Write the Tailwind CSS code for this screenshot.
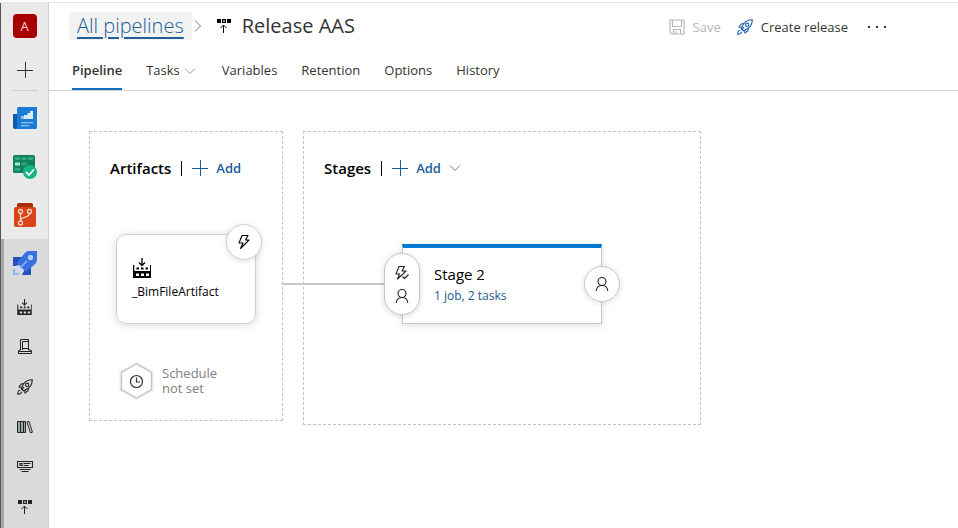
<!DOCTYPE html>
<html lang="en">
<head>
<meta charset="utf-8">
<title>Release AAS - Pipelines</title>
<script src="https://cdn.jsdelivr.net/npm/@tailwindcss/browser@4"></script>
</head>
<body class="flex min-h-screen flex-col bg-white font-['Open_Sans','Noto_Sans',sans-serif] text-[13px] leading-5 text-[#333]">

<svg class="hidden" aria-hidden="true">
  <symbol id="build" viewBox="0 0 18 20">
    <path fill="currentColor" fill-rule="evenodd" d="M0 7h1.300v6H17V7h1v13H0zM3 15.500v2.500h3v-2.500zm5 0v2.500h3v-2.500zm5 0v2.500h3v-2.500zM3.500 9.500h2.500v2h-2.500zM8 9.500h2.500v2H8zM12.500 9.500H15v2h-2.500z"/>
    <path fill="none" stroke="currentColor" stroke-width="1.300" d="M9 0v7M6 4.500l3 3 3-3"/>
  </symbol>
  <symbol id="release" viewBox="0 0 16 16">
    <path fill="currentColor" fill-rule="evenodd" d="M1 1h4v4H1zM6 1h4v4H6zm1.200 1.200v1.600h1.600V2.200zM11 1h4v4h-4z"/>
    <path fill="none" stroke="currentColor" stroke-width="1" d="M7.500 15V7.500M4.500 10l3-3 3 3"/>
  </symbol>
  <symbol id="rocket" viewBox="0 0 16 16">
    <g fill="none" stroke="currentColor" stroke-width="1.100">
      <path d="M15.300.700C11.500.800 8.500 2 6.500 5L4.200 9.300l2.500 2.500L11 9.500c3-2 4.200-5 4.300-8.800z"/>
      <path d="M7 4.500 4.200 5 2 8l2.700.300M11.500 9 11 11.800 8 14l-.300-2.700M4.200 9.300l2.500 2.500"/>
      <circle cx="10.200" cy="5.800" r="1.700"/>
      <path d="M4.500 10.500 7 8M3.300 11.300c-1.700 0-2.400 1.300-2.500 3.900 2.500-.100 3.800-.800 3.900-2.400"/>
    </g>
  </symbol>
  <symbol id="plus" viewBox="0 0 16 16"><path fill="none" stroke="currentColor" stroke-width="1" d="M0 8.500h16M8.500 0v16"/></symbol>
  <symbol id="down" viewBox="0 0 12 8"><path fill="none" stroke="currentColor" d="m1 1.500 5 5 5-5"/></symbol>
  <symbol id="bolt" viewBox="0 0 16 16"><path fill="none" stroke="currentColor" stroke-width="1.100" stroke-linejoin="round" d="M6 1.500h6L9.500 6H13L4.500 14.500 7 9H3z"/></symbol>
  <symbol id="boltcheck" viewBox="0 0 16 16"><path fill="none" stroke="currentColor" stroke-width="1.100" stroke-linejoin="round" d="M9.500 8.500 3.500 14l2-5H2l3-7.500h5.500L8 6h4zM8.500 11.500l2 2 4-4"/></symbol>
  <symbol id="person" viewBox="0 0 16 16"><g fill="none" stroke="currentColor" stroke-width="1.100"><circle cx="8" cy="5.500" r="4"/><path d="M2.200 15c.300-3.500 2.500-5.500 5.800-5.500s5.500 2 5.800 5.500"/></g></symbol>
</svg>

<div class="mt-[2px] flex flex-1 border-t border-[#e4e4e4]">
  <nav aria-label="Project" class="flex w-[49px] shrink-0 flex-col border-r border-l border-r-[#d0d0d0] border-l-[#555] bg-[#eaeaea]">
    <div class="flex h-[87px] flex-col items-center gap-6 pt-[11px]">
      <a href="#" aria-label="Project A" class="flex size-6 shrink-0 items-center justify-center rounded bg-[#a80000] text-[13px] text-[#f6d5d5]">A</a>
      <button aria-label="New" class="text-[#333]"><svg class="size-4"><use href="#plus"/></svg></button>
    </div>
    <hr class="mx-[10px] border-[#cfcfcf]">
    <a href="#" aria-label="Overview" class="mt-1 flex h-12 items-center justify-center">
      <svg class="size-6" viewBox="0 0 24 24"><path fill="#0d5ba5" d="M0 7h6v15H2a2 2 0 0 1-2-2z"/><path fill="#1b7cd3" d="M4 1.500A1.500 1.500 0 0 1 5.500 0H24v20.500a1.500 1.500 0 0 1-1.500 1.500H2.500A2 2 0 0 0 4 20z"/><path fill="#d7eafa" d="M8 12V9h3V8h3.500V6H17V4h3v8z"/><path fill="#8fc3ee" d="M8 9h3v3H8zM8 15h12v1.200H8zM8 18h8v1.200H8z"/></svg>
    </a>
    <a href="#" aria-label="Boards" class="flex h-12 items-center justify-center">
      <svg class="size-6" viewBox="0 0 24 24"><rect y="0" width="22" height="18" rx="1.500" fill="#15805f"/><path fill="#2fa87f" d="M2 2h5v3H2zM8.500 2h5v3h-5zM15 2h5v3h-5zM8.500 7.500h5v3h-5zM2 13h5v3H2z"/><path fill="#9cf0cd" d="M2 7.500h5v3H2z"/><circle cx="17" cy="17" r="7" fill="#17b584"/><path fill="none" stroke="#fff" stroke-width="1.800" d="m13 17 3 3 5-5.500"/></svg>
    </a>
    <a href="#" aria-label="Repos" class="flex h-12 items-center justify-center">
      <svg class="size-6" viewBox="0 0 24 24"><path fill="#a5300b" d="M4 1.500A1.500 1.500 0 0 1 5.500 0h13A1.500 1.500 0 0 1 20 1.500V5H4z"/><rect x="1" y="4" width="22" height="20" rx="2" fill="#d8451a"/><g fill="none" stroke="#ffd5c5" stroke-width="1.300"><circle cx="7.500" cy="8.500" r="2"/><circle cx="16.500" cy="8.500" r="2"/><circle cx="7.500" cy="20" r="2"/><path d="M7.500 10.500V18M16.500 10.500c0 4.500-8 2.500-9 7"/></g></svg>
    </a>
    <div class="flex flex-1 flex-col border-l-[3px] border-[#a6a6a6] bg-[#dadada] pr-[3px] text-[#222]">
      <a href="#" aria-label="Pipelines" class="flex h-12 items-center justify-center">
        <svg class="size-6" viewBox="0 0 24 24"><path fill="#2450bb" d="M0 6h9l-4 9H0zM18 14v10h-9l4-8z"/><path fill="#3b6fe0" d="M16 0h8v8c0 3-1 4-3 6l-8 7-9-9 7-9c1.500-2 3-3 5-3z"/><circle cx="17.500" cy="6.500" r="2.700" fill="#a9cbff"/><path stroke="#8db5ff" stroke-width="1.500" d="m5 19 9-9"/><path fill="#c9dcff" d="m4 14 6 6-2 2-6-6z"/><path fill="#8fb2f4" d="M0 18h2v4h4v2H0z"/></svg>
      </a>
      <a href="#" aria-label="Builds" class="flex h-10 items-center justify-center"><svg class="h-4 w-[15px]"><use href="#build"/></svg></a>
      <a href="#" aria-label="Environments" class="flex h-10 items-center justify-center">
        <svg class="size-4" viewBox="0 0 16 16"><path fill="none" stroke="currentColor" d="M3.500 11V.500h8V11M5.500 11V2.500h6M5.500 9.500h6M3.500 11H2L1.500 13v1.500h13V13l-.500-2h-2.500M1.500 12.500h13"/></svg>
      </a>
      <a href="#" aria-label="Releases" class="flex h-10 items-center justify-center"><svg class="size-4"><use href="#rocket"/></svg></a>
      <a href="#" aria-label="Library" class="flex h-10 items-center justify-center">
        <svg class="size-4" viewBox="0 0 16 16"><g fill="#9aa8a4" stroke="currentColor"><path d="M.500 2.500h3v11h-3zM3.500 2.500h3v11h-3zM6.500 2.500h2v11h-2z"/><path fill="none" d="m10 3 2-.600 3.400 10.800-2 .600z"/></g></svg>
      </a>
      <a href="#" aria-label="Task groups" class="flex h-10 items-center justify-center">
        <svg class="size-4" viewBox="0 0 16 16"><path fill="none" stroke="currentColor" stroke-width="1.100" d="M.500 2.500h15v6H.500zM3 4.500h2v2H3zM6.500 4.500h7M6.500 6.500h5M2.500 10.500h11M4.500 12.500h7"/></svg>
      </a>
      <a href="#" aria-label="Deployment groups" class="flex h-10 items-center justify-center"><svg class="size-4"><use href="#release"/></svg></a>
    </div>
  </nav>

  <main class="min-w-0 flex-1">
    <header class="border-b border-[#d6d6d6] pl-5">
      <div class="flex h-[46px] items-center pr-[72px]">
        <a href="#" class="flex h-7 items-center bg-[#f2f2f2] px-2 text-[20px] font-light text-[#215f9a] underline decoration-2 underline-offset-4">All pipelines</a>
        <svg class="ml-[2px] h-3 w-2 text-[#777]" viewBox="0 0 8 12"><path fill="none" stroke="currentColor" d="m1 .500 5.500 5.500L1 11.500"/></svg>
        <svg class="ml-[14px] size-4 text-black"><use href="#release"/></svg>
        <h1 class="ml-[10px] text-[20px] text-[#333]">Release AAS</h1>
        <div class="ml-auto flex items-center gap-4 pt-[2px]">
          <button disabled class="flex items-center gap-2 text-[#b8b8b8]">
            <svg class="size-4" viewBox="0 0 16 16"><path fill="none" stroke="currentColor" stroke-width="1.200" d="M1 1h14v14H3l-2-2zM3.500 1v6.500h9V1M4.500 15v-4.500h7V15M7 12v3"/></svg>Save</button>
          <button class="flex items-center gap-2"><svg class="size-4 text-[#1f5fae]"><use href="#rocket"/></svg>Create release</button>
          <button aria-label="More actions" class="ml-1 flex w-[18px] justify-between"><span class="size-[2px] bg-[#333]"></span><span class="size-[2px] bg-[#333]"></span><span class="size-[2px] bg-[#333]"></span></button>
        </div>
      </div>
      <nav aria-label="Release" class="flex h-[41px] gap-6 pl-[3px]">
        <a href="#" class="border-b-2 border-[#106ebe] pt-[11px] font-semibold">Pipeline</a>
        <a href="#" class="flex gap-1 pt-[11px]">Tasks<svg class="mt-[7px] h-2 w-3 text-[#999]"><use href="#down"/></svg></a>
        <a href="#" class="ml-[2px] pt-[11px]">Variables</a>
        <a href="#" class="pt-[11px]">Retention</a>
        <a href="#" class="pt-[11px]">Options</a>
        <a href="#" class="pt-[11px]">History</a>
      </nav>
    </header>

    <div class="flex items-start gap-5 p-10">
      <section class="w-[194px] shrink-0 border border-dashed border-[#c2c2c2] pt-6 pb-5">
        <div class="flex h-6 items-center pl-5">
          <h2 class="text-[15px] font-semibold text-black">Artifacts</h2>
          <span class="ml-[10px] h-[15px] w-px bg-black"></span>
          <button class="ml-[10px] flex items-center gap-2 font-semibold text-[#1a5c9c]"><svg class="size-4"><use href="#plus"/></svg>Add</button>
        </div>
        <div class="relative mt-[54px] ml-[26px] flex h-[90px] w-[140px] flex-col rounded-[10px] border border-[#cfcfcf] pt-[23px] pl-[15px] text-black shadow-[0_1px_8px_rgba(0,0,0,0.15)]">
          <svg class="ml-[1px] h-5 w-[18px]"><use href="#build"/></svg>
          <a href="#" class="mt-1 text-[12px]">_BimFileArtifact</a>
          <button aria-label="Continuous deployment trigger" class="absolute -top-[11px] -right-[7px] flex size-9 items-center justify-center rounded-full border border-[#cfcfcf] bg-white shadow-[0_1px_6px_rgba(0,0,0,0.12)]"><svg class="size-4"><use href="#bolt"/></svg></button>
        </div>
        <button class="mt-[38px] ml-[29px] flex items-center gap-2 text-left text-[13px] leading-[15px] text-[#808080]">
          <svg class="h-[38px] w-[35px]" viewBox="0 0 35 38"><path fill="none" stroke="#eeeeee" stroke-width="4" d="m17.500 2 15 8.500v17l-15 8.500-15-8.500v-17z"/><path fill="#fff" stroke="#c4c4c4" stroke-width="1.300" d="m17.500 2 15 8.500v17l-15 8.500-15-8.500v-17z"/><circle cx="17.500" cy="19.500" r="6" fill="none" stroke="#333" stroke-width="1.200"/><path fill="none" stroke="#333" stroke-width="1.200" d="M17.500 15.500v4.500h3.500"/></svg>
          <span>Schedule<br>not set</span>
        </button>
      </section>

      <section class="w-[398px] shrink-0 border border-dashed border-[#c2c2c2] pt-6 pb-[100px]">
        <div class="flex h-6 items-center pl-5">
          <h2 class="text-[15px] font-semibold text-black">Stages</h2>
          <span class="ml-[10px] h-[15px] w-px bg-black"></span>
          <button class="ml-[10px] flex items-center gap-2 font-semibold text-[#1a5c9c]"><svg class="size-4"><use href="#plus"/></svg>Add<svg class="h-2 w-3 text-[#5f7f9f]"><use href="#down"/></svg></button>
        </div>
        <div class="mt-16 -ml-[21px] flex items-center">
          <span class="h-[2px] w-[119px] bg-[#c8c8c8]"></span>
          <div class="relative h-20 w-[200px] border border-t-4 border-[#c8c8c8] border-t-[#0078d4] bg-white pt-[15px] pl-[31px] shadow-[0_2px_8px_rgba(0,0,0,0.12)]">
            <h3 class="text-[15px] leading-[22px] text-black">Stage 2</h3>
            <a href="#" class="block text-[12px] leading-[22px] text-[#1a5c8c]">1 job, 2 tasks</a>
            <button aria-label="Pre-deployment conditions" class="absolute top-[5px] -left-[19px] flex h-[62px] w-9 flex-col items-center justify-center gap-[7px] rounded-full border border-[#c8c8c8] bg-white text-[#222] shadow-[0_1px_6px_rgba(0,0,0,0.15)]"><svg class="size-4"><use href="#boltcheck"/></svg><svg class="size-4"><use href="#person"/></svg></button>
            <button aria-label="Post-deployment conditions" class="absolute top-[18px] -right-[19px] flex size-9 items-center justify-center rounded-full border border-[#c8c8c8] bg-white text-[#222] shadow-[0_1px_6px_rgba(0,0,0,0.12)]"><svg class="size-4"><use href="#person"/></svg></button>
          </div>
        </div>
      </section>
    </div>
  </main>
</div>
</body>
</html>
